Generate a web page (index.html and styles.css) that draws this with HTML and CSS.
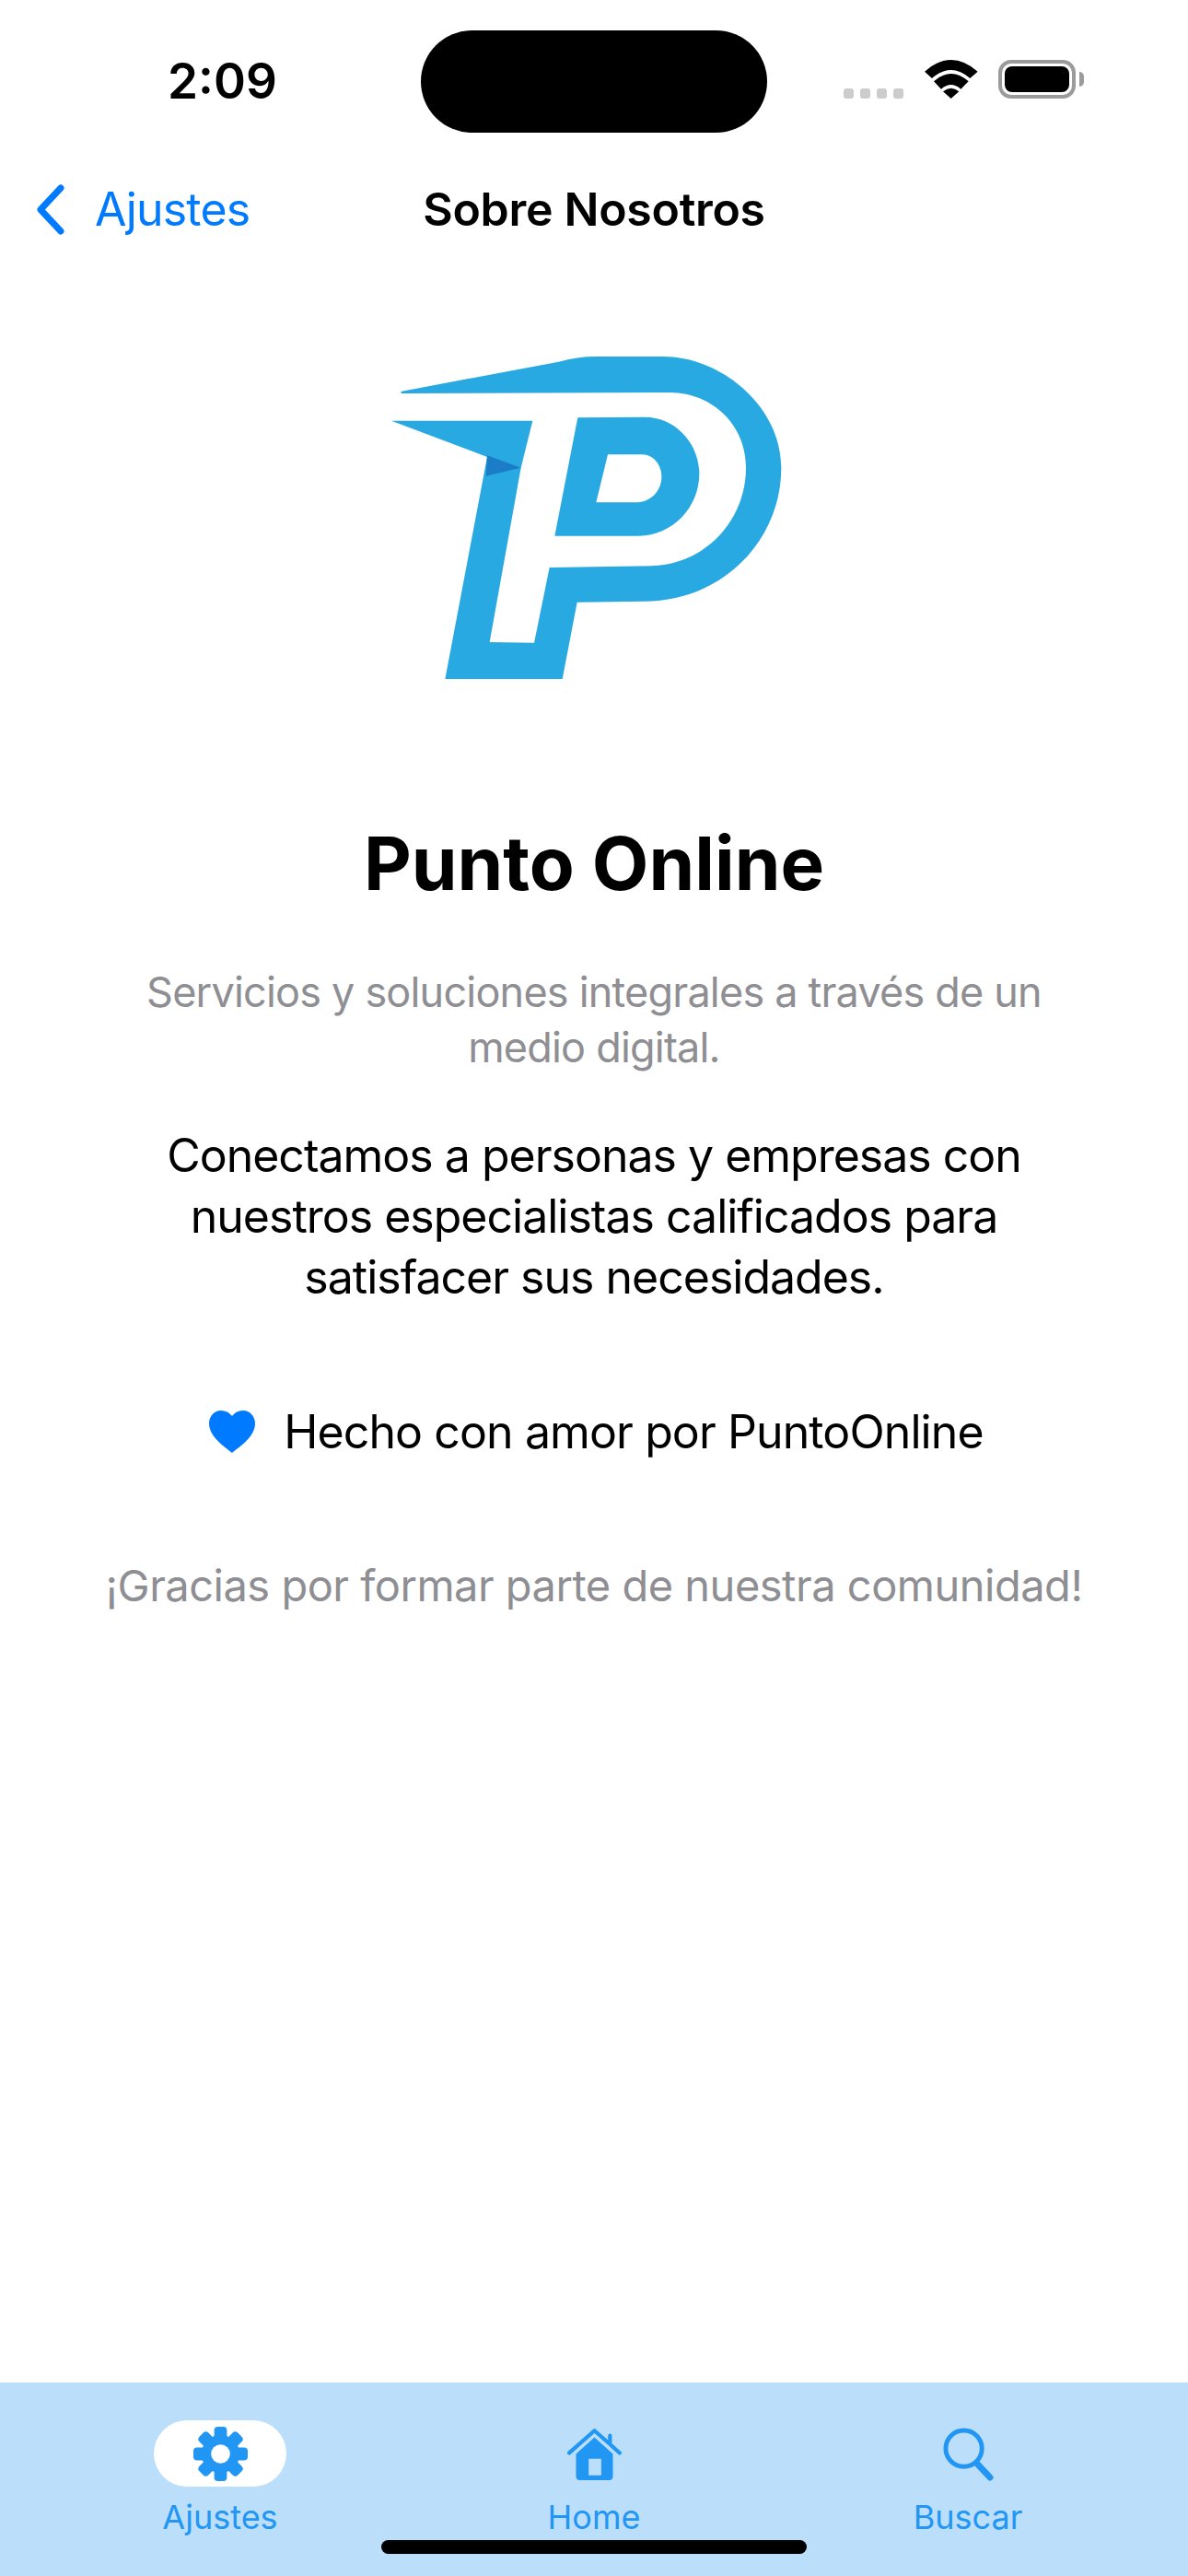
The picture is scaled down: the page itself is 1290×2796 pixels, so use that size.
FILE: index.html
```html
<!DOCTYPE html>
<html lang="es">

<head>
  <meta charset="UTF-8">
  <meta name="viewport" content="width=device-width, initial-scale=1.0">
  <title>Sobre Nosotros</title>
  <link rel="stylesheet" href="styles.css">
</head>

<body>
  <div class="status-bar">
    <div class="status-time">2:09</div>
    <div class="island"></div>
    <div class="status-icons">
      <div class="signal"><span></span><span></span><span></span><span></span></div>
      <svg class="wifi" viewBox="372 75 174 126">
        <path d="M372 113Q458 37 545 113L520 135Q458 81 396 135Z" />
        <path d="M402 145Q458 95 515 145L490 170Q458 142 426 170Z" />
        <path d="M432 178Q458 156 484 178L458 201Z" />
      </svg>
      <div class="battery"><div class="battery-fill"></div></div>
    </div>
  </div>

  <header class="nav-bar">
    <a class="nav-back">
      <svg class="chevron" viewBox="0 0 33 57">
        <path d="M28 5L6 28.500L28 52" />
      </svg>
      <span>Ajustes</span>
    </a>
    <h1 class="nav-title">Sobre Nosotros</h1>
    <div></div>
  </header>

  <main class="content">
    <svg class="logo" viewBox="0 0 1440 1200">
      <path class="logo-main" d="M105 192L620 95Q680 78 740 78L960 78C1150 78 1345 240 1345 440C1345 680 1150 875 900 875L680 878L632 1128L250 1128L387 405L75 287L535 287L497 440L395 1008L540 1010L590 765L920 760C1100 755 1230 610 1230 440C1230 300 1120 195 980 195L108 198Z" />
      <path class="logo-main" fill-rule="evenodd" d="M682 277L900 275C1000 275 1078 360 1078 460C1078 570 990 662 880 662L607 662ZM780 397L742 553L870 553C920 553 955 515 955 470C955 430 930 397 890 397Z" />
      <path class="logo-dark" d="M387 400L497 440L383 467Z" />
    </svg>

    <h2 class="app-name">Punto Online</h2>
    <p class="tagline">Servicios y soluciones integrales a través de un medio digital.</p>
    <p class="description">Conectamos a personas y empresas con nuestros especialistas calificados para satisfacer sus necesidades.</p>

    <div class="made-with">
      <svg class="heart" viewBox="0 0 50 46">
        <path d="M25 46C21 42 0 30 0 14C0 6 6 0 13 0C18 0 22 2 25 6C28 2 32 0 37 0C44 0 50 6 50 14C50 30 29 42 25 46Z" />
      </svg>
      <span>Hecho con amor por PuntoOnline</span>
    </div>

    <p class="thanks">¡Gracias por formar parte de nuestra comunidad!</p>
  </main>

  <nav class="tab-bar">
    <div class="tab">
      <div class="tab-pill">
        <svg class="tab-icon" viewBox="0 0 60 60">
          <g class="gear-teeth">
            <rect x="23" y="0" width="14" height="60" rx="4" />
            <rect x="23" y="0" width="14" height="60" rx="4" transform="rotate(45 30 30)" />
            <rect x="23" y="0" width="14" height="60" rx="4" transform="rotate(90 30 30)" />
            <rect x="23" y="0" width="14" height="60" rx="4" transform="rotate(135 30 30)" />
          </g>
          <circle cx="30" cy="30" r="21" class="gear-body" />
          <circle cx="30" cy="30" r="10.500" class="gear-hole" />
        </svg>
      </div>
      <span>Ajustes</span>
    </div>
    <div class="tab">
      <div class="tab-pill">
        <svg class="tab-icon" viewBox="0 0 56 54">
          <path d="M9 27L28 10L47 27V50Q47 54 43 54H13Q9 54 9 50ZM22 32V49H35V32Z" fill-rule="evenodd" />
          <path class="home-roof" d="M2 26L28 3L44 17V8M44 17L54 26" />
        </svg>
      </div>
      <span>Home</span>
    </div>
    <div class="tab">
      <div class="tab-pill">
        <svg class="tab-icon" viewBox="0 0 56 60">
          <circle cx="23" cy="24" r="20" class="search-ring" />
          <path class="search-handle" d="M37 40L52 56" />
        </svg>
      </div>
      <span>Buscar</span>
    </div>
    <div class="home-indicator"></div>
  </nav>
</body>

</html>
```

FILE: styles.css
```css
body {
  font-family: Inter, "Liberation Sans", sans-serif;
  background-color: #fff;
  color: #000;
  margin: 0;
  height: 2796px;
  display: flex;
  flex-direction: column;
  overflow: hidden;
}

/* status bar */

.status-bar {
  display: grid;
  grid-template-columns: 457px 376px 1fr;
  height: 111px;
  padding-top: 33px;
}

.status-time {
  font-size: 53px;
  font-weight: 600;
  text-align: center;
  line-height: 111px;
  padding-left: 26px;
  box-sizing: border-box;
}

.island {
  background-color: #000;
  border-radius: 56px;
}

.status-icons {
  display: flex;
  align-items: flex-start;
  padding: 32px 0 0 83px;
}

.signal {
  display: flex;
  gap: 7px;
  margin-top: 31px;
  margin-right: 23px;
}

.signal span {
  width: 11px;
  height: 11px;
  border-radius: 3px;
  background-color: #ccc;
}

.wifi {
  width: 58px;
  height: 42px;
  margin-right: 22px;
}

.battery {
  position: relative;
  width: 84px;
  height: 42px;
  box-sizing: border-box;
  border: 4px solid #9b9b9b;
  border-radius: 14px;
  padding: 3px;
}

.battery::after {
  content: "";
  position: absolute;
  left: 84px;
  top: 9px;
  width: 5px;
  height: 16px;
  background-color: #9b9b9b;
  border-radius: 0 5px 5px 0;
}

.battery-fill {
  height: 100%;
  background-color: #000;
  border-radius: 8px;
}

/* nav bar */

.nav-bar {
  display: grid;
  grid-template-columns: 1fr auto 1fr;
  align-items: center;
  height: 86px;
  margin-top: 40px;
  padding-left: 38px;
}

.nav-back {
  display: flex;
  align-items: center;
  gap: 32px;
  color: #007aff;
  font-size: 50px;
  letter-spacing: -0.8px;
}

.chevron {
  width: 33px;
  height: 57px;
  fill: none;
  stroke: #007aff;
  stroke-width: 7;
  stroke-linecap: round;
  stroke-linejoin: round;
}

.nav-title {
  margin: 0 38px 0 0;
  font-size: 50px;
  font-weight: 600;
  letter-spacing: -0.3px;
}

/* content */

.content {
  flex: 1;
  display: flex;
  flex-direction: column;
  align-items: center;
  text-align: center;
}

.logo {
  width: 480px;
  height: 400px;
  margin-top: 91px;
  margin-right: 10px;
}

.logo-main {
  fill: #29a9e2;
}

.logo-dark {
  fill: #1b7cc8;
}

.app-name {
  margin: 128px 0 0;
  font-size: 80px;
  font-weight: 700;
  line-height: 96px;
}

.tagline {
  margin: 62px 0 0;
  width: 1040px;
  font-size: 45px;
  line-height: 60px;
  letter-spacing: -0.8px;
  color: #8e8e93;
}

.description {
  margin: 54px 0 0;
  width: 1040px;
  font-size: 50px;
  line-height: 66px;
  letter-spacing: -1px;
}

.made-with {
  display: flex;
  align-items: center;
  gap: 31px;
  margin-top: 102px;
  margin-left: 5px;
  font-size: 50px;
  line-height: 66px;
  letter-spacing: -0.9px;
}

.heart {
  width: 50px;
  height: 46px;
  fill: #007aff;
}

.thanks {
  margin: 104px 0 0;
  font-size: 47px;
  line-height: 60px;
  letter-spacing: -0.5px;
  color: #8e8e93;
}

/* tab bar */

.tab-bar {
  position: relative;
  display: grid;
  grid-template-columns: repeat(3, 406px);
  justify-content: center;
  height: 210px;
  padding-top: 41px;
  box-sizing: border-box;
  background-color: #bbdefb;
}

.tab {
  display: flex;
  flex-direction: column;
  align-items: center;
  color: #2196f3;
  font-size: 36px;
}

.tab:first-child .tab-pill {
  background-color: #fff;
}

.tab-pill {
  display: flex;
  align-items: center;
  justify-content: center;
  width: 144px;
  height: 72px;
  border-radius: 36px;
  margin-bottom: 11px;
}

.tab-icon {
  width: 59px;
  height: 59px;
  fill: #2196f3;
}

.gear-body {
  fill: #2196f3;
}

.gear-hole {
  fill: #fff;
}

.home-roof {
  fill: none;
  stroke: #2196f3;
  stroke-width: 4;
  stroke-linecap: round;
  stroke-linejoin: round;
}

.search-ring {
  fill: none;
  stroke: #2196f3;
  stroke-width: 5;
}

.search-handle {
  fill: none;
  stroke: #2196f3;
  stroke-width: 7;
  stroke-linecap: round;
}

.home-indicator {
  position: absolute;
  left: 414px;
  top: 171px;
  width: 462px;
  height: 15px;
  border-radius: 8px;
  background-color: #000;
}
```
